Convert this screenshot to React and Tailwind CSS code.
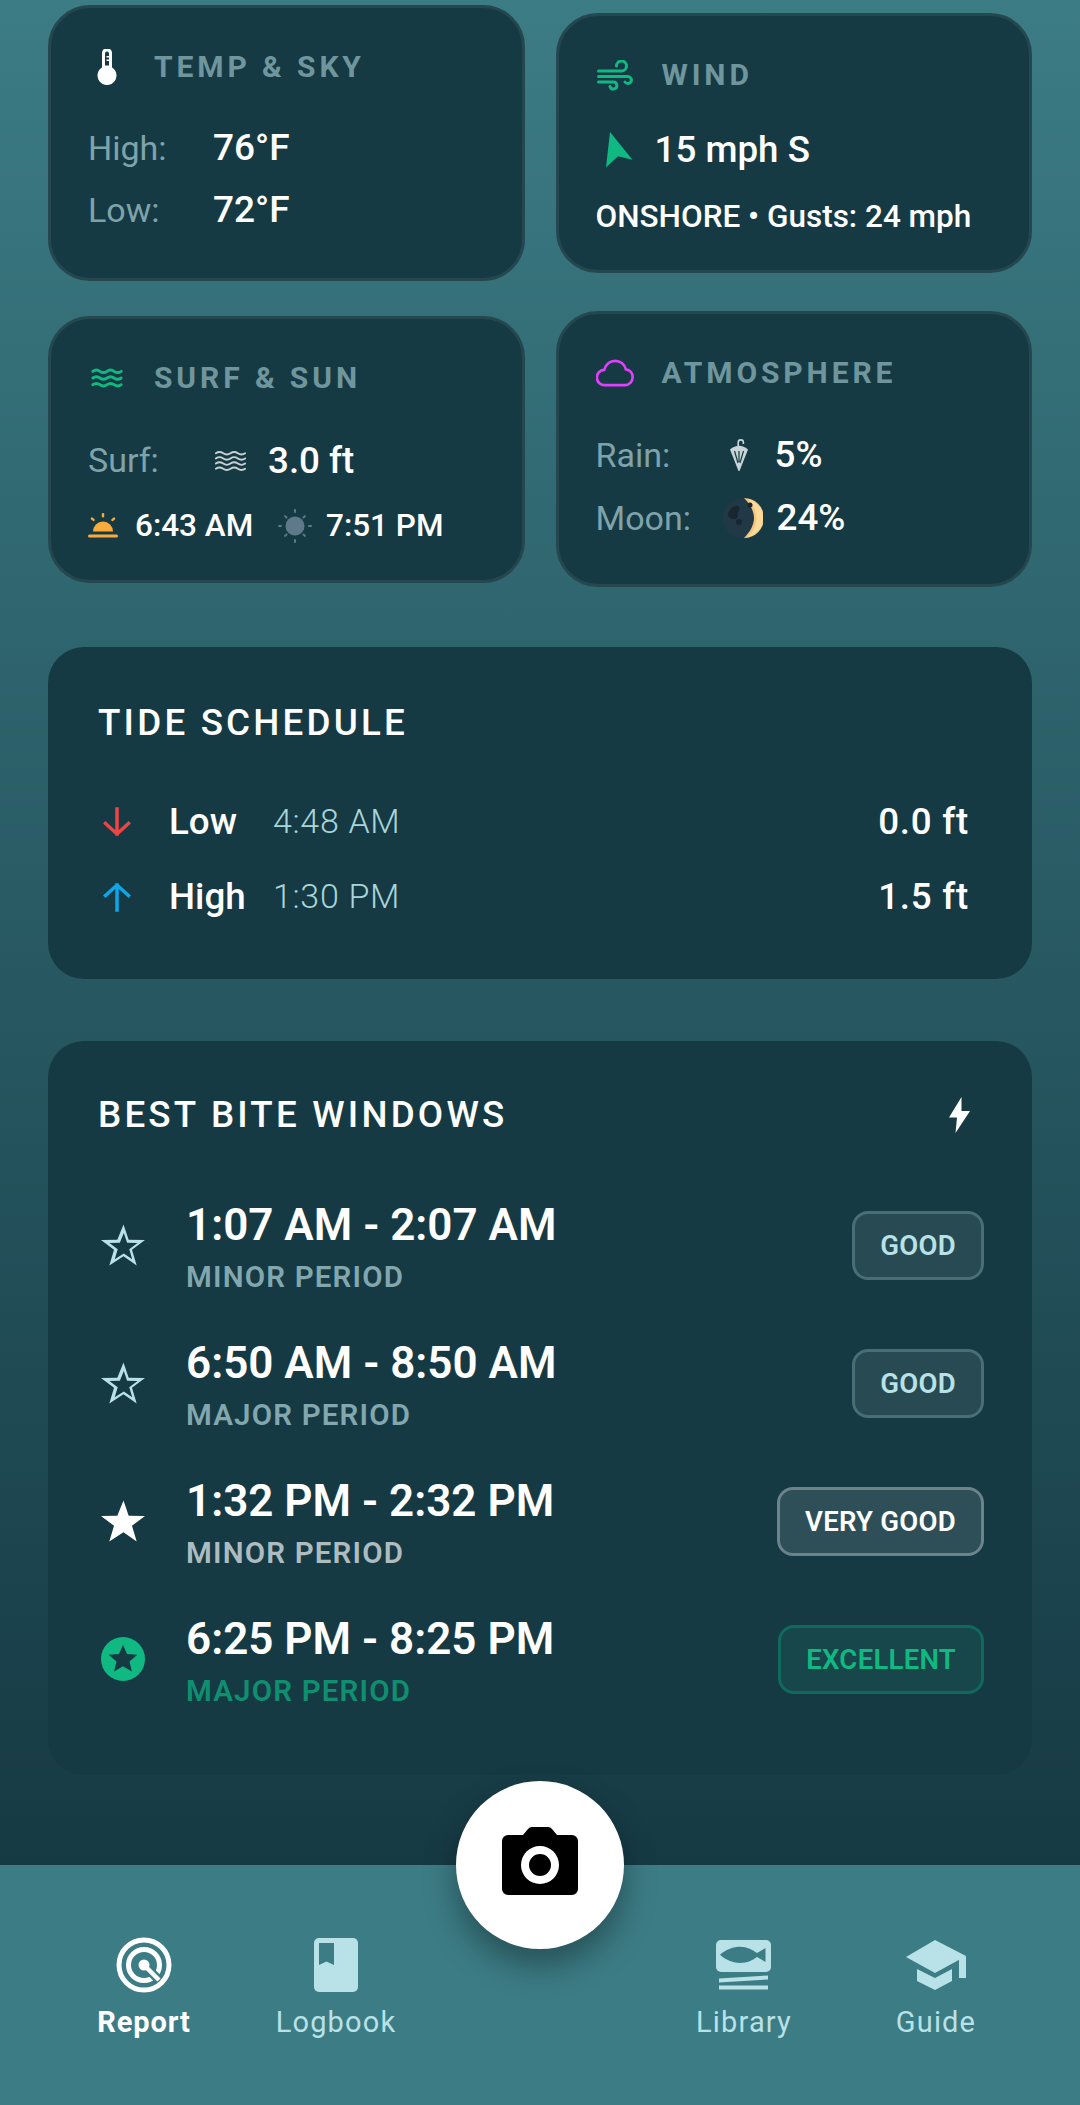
const font = { fontFamily: "Roboto, sans-serif" };

function Thermometer() {
  return (
    <svg width="20" height="36" viewBox="0 0 20 36">
      <path d="M5 4a5 5 0 0 1 10 0v14.500a9.500 9.500 0 1 1-10 0z" fill="#fff" />
      <path d="M8 4.500a2 2 0 0 1 4 0v12h-4z" fill="#163a44" />
      <path d="M9.500 7h2.500v1.500h-2.500zM9.500 10.500h2.500v1.500h-2.500z" fill="#fff" />
    </svg>
  );
}

function Wind() {
  return (
    <svg width="36" height="31" viewBox="0 0 36 31" fill="none" stroke="#10b981" strokeWidth="3" strokeLinecap="round">
      <path d="M1.500 11h23a5 5 0 1 0-5-5" />
      <path d="M1.500 16.500h29.500a3.500 3.500 0 1 1-3 5.500" />
      <path d="M1.500 22h15a3.500 3.500 0 1 1-3.500 4.500" />
    </svg>
  );
}

function Waves({ color, w, h, sw, lines }) {
  const step = 24 / lines;
  const rows = [];
  for (let i = 0; i < lines; i++) rows.push(step / 2 + i * step);
  return (
    <svg width={w} height={h} viewBox="0 0 36 24" fill="none" stroke={color} strokeWidth={sw} strokeLinecap="round">
      {rows.map((y) => (
        <path key={y} d={`M1 ${y}q4.250-3 8.500 0t8.500 0 8.500 0 8.500 0`} />
      ))}
    </svg>
  );
}

function Sunrise() {
  return (
    <svg width="30" height="25" viewBox="0 0 30 25" fill="#fbab3c">
      <path d="M5 18.500a10 10 0 0 1 20 0z" />
      <rect x="0" y="21.500" width="30" height="3" rx="1.500" />
      <rect x="13.800" y="0" width="2.400" height="4.500" rx="1.200" />
      <rect x="3.500" y="4" width="2.400" height="4.500" rx="1.200" transform="rotate(-50 4.700 6.200)" />
      <rect x="24.100" y="4" width="2.400" height="4.500" rx="1.200" transform="rotate(50 25.300 6.200)" />
    </svg>
  );
}

function Sunset() {
  const rays = [0, 45, 90, 135, 180, 225, 270, 315];
  return (
    <svg width="34" height="34" viewBox="0 0 34 34" fill="#5e7a8a">
      <circle cx="17" cy="17" r="9.500" />
      {rays.map((r) => (
        <rect key={r} x="16" y={r % 90 === 0 ? 0 : 2} width="2" height="4" rx="1" transform={`rotate(${r} 17 17)`} />
      ))}
    </svg>
  );
}

function Umbrella() {
  return (
    <svg width="18" height="32" viewBox="0 0 18 32" fill="#c8d5d8">
      <path d="M0 10.500C3 8 6 6.800 9 6.800s6 1.200 9 3.700L9.500 32h-1z" />
      <path d="M8.200 8V3.500a2.600 2.600 0 0 1 5.200 0v1.500" fill="none" stroke="#c8d5d8" strokeWidth="1.600" />
      <path d="M4.500 12 8 24M13.500 12 10 24M9 12v11" fill="none" stroke="#163a44" strokeWidth="1.200" />
    </svg>
  );
}

function Moon() {
  return (
    <svg width="40" height="40" viewBox="0 0 40 40">
      <circle cx="20" cy="20" r="20" fill="#213846" />
      <path d="M21 0a20 20 0 0 1 0 40c6-6 10-13 10-20S27 6 21 0z" fill="#f3c67e" />
      <path d="M25 1c5 5 8.500 12 8.500 19S30 34 25 39c8-2 15-9 15-19S33 3 25 1z" fill="#fbdb9b" />
      <path d="M6 13c2-3 6-6 9-5 2 1 2 4 0 6-1 2 1 4-1 6s-6 1-8-1-1-4 0-6z" fill="#18272f" />
      <circle cx="16" cy="24" r="3" fill="#18272f" />
      <circle cx="27" cy="7" r="2.500" fill="#18272f" />
    </svg>
  );
}

function Arrow({ up, color }) {
  return (
    <svg width="28" height="30" viewBox="0 0 28 30" fill="none" stroke={color} strokeWidth="3.500" strokeLinecap="square">
      {up ? <path d="M14 28V3M2.500 13.500 14 3l11.500 10.500" /> : <path d="M14 2v25M2.500 16.500 14 27l11.500-10.500" />}
    </svg>
  );
}

const STAR = "M22 0l5.300 15.600 16.700.3-13.300 10 4.800 16.100L22 32.500 7.500 42l4.800-16.100L-1 15.900l16.700-.3z";

function StarIcon({ kind }) {
  if (kind === "circle") {
    return (
      <svg width="44" height="44" viewBox="0 0 46 46">
        <circle cx="23" cy="23" r="23" fill="#10b981" />
        <path d="M23 8l4.200 9.700 10.800.9-8.200 7 2.500 10.400-9.300-5.500-9.300 5.500 2.500-10.400-8.200-7 10.800-.9z" fill="#163a44" />
      </svg>
    );
  }
  return (
    <svg width="44" height="42" viewBox="-1 0 45 42">
      <path d={STAR} fill={kind === "solid" ? "#fff" : "#b8e2e7"} />
      {kind === "outline" && <path d={STAR} fill="#163a44" transform="translate(22 24.500) scale(.64) translate(-21.500 -24.500)" />}
    </svg>
  );
}

function Bolt() {
  return (
    <svg width="21" height="36" viewBox="0 0 21 36" fill="#fff">
      <path d="M12.500 0 0 20.500h8L6.500 36 21 14h-8.500z" />
    </svg>
  );
}

function ReportIcon() {
  return (
    <svg width="56" height="56" viewBox="0 0 56 56" fill="none" stroke="#fff">
      <circle cx="28" cy="28" r="25" strokeWidth="5" />
      <circle cx="28" cy="28" r="15.500" strokeWidth="5" />
      <path d="M35 35 43 43" strokeWidth="9" stroke="#3c7c85" />
      <path d="M28 28 43 43" strokeWidth="4.500" />
      <circle cx="28" cy="28" r="5.500" fill="#fff" stroke="none" />
    </svg>
  );
}

function LogbookIcon() {
  return (
    <svg width="44" height="54" viewBox="0 0 44 54">
      <rect width="44" height="54" rx="5" fill="#b8e2e7" />
      <path d="M5 5h15v22l-7.500-3.500L5 27z" fill="#3c7c85" />
    </svg>
  );
}

function LibraryIcon() {
  return (
    <svg width="56" height="50" viewBox="0 0 56 50">
      <rect width="55" height="32" rx="5" fill="#b8e2e7" />
      <path d="M4 14.800C10 9 18 6.700 24 6.700c7 0 13 3.300 17 6.300L49.500 8v14L41 17c-4 3-10 6-17 6-6 0-14-2.500-20-8.200z" fill="#3c7c85" />
      <path d="M3 38.500 52 35.500v4L3 42.500z" fill="#b8e2e7" />
      <rect x="3" y="45.500" width="49" height="4" fill="#b8e2e7" />
    </svg>
  );
}

function GuideIcon() {
  return (
    <svg width="60" height="50" viewBox="0 0 60 50" fill="#b8e2e7">
      <path d="M0 17 29 0l31 16-31 17z" />
      <path d="M11 29l18 9 17-9v12L29 50 11 41z" />
      <path d="M53 18l7-2v22h-7z" />
    </svg>
  );
}

function CameraIcon() {
  return (
    <svg width="76" height="68" viewBox="0 0 76 68">
      <path
        fillRule="evenodd"
        fill="#000"
        d="M6 8h15l5-6a5 5 0 0 1 4-2h16a5 5 0 0 1 4 2l5 6h15a6 6 0 0 1 6 6v48a6 6 0 0 1-6 6H6a6 6 0 0 1-6-6V14a6 6 0 0 1 6-6zM38 19a19 19 0 1 0 0 38 19 19 0 0 0 0-38zm0 8a11 11 0 1 1 0 22 11 11 0 0 1 0-22z"
      />
    </svg>
  );
}

function Card({ icon, title, className, children }) {
  return (
    <div className={`rounded-[42px] border-[3px] border-[#25474f] bg-[#163a44] px-[37px] ${className}`}>
      <div className="flex h-[40px] items-center">
        <div className="flex w-[38px] shrink-0 items-center justify-center">{icon}</div>
        <div className="ml-[28px] text-[30px] font-bold leading-none tracking-[0.13em] text-[#6f969d]">{title}</div>
      </div>
      {children}
    </div>
  );
}

const bites = [
  { time: "1:07 AM - 2:07 AM", sub: "MINOR PERIOD", tag: "GOOD", star: "outline", subc: "text-[#82a7ae]", chip: "border-[#4a6e76] bg-[#274a53] text-[#b8e2e7]" },
  { time: "6:50 AM - 8:50 AM", sub: "MAJOR PERIOD", tag: "GOOD", star: "outline", subc: "text-[#82a7ae]", chip: "border-[#4a6e76] bg-[#274a53] text-[#b8e2e7]" },
  { time: "1:32 PM - 2:32 PM", sub: "MINOR PERIOD", tag: "VERY GOOD", star: "solid", subc: "text-[#adbcc0]", chip: "border-[#6b8389] bg-[#2e4f58] text-white" },
  { time: "6:25 PM - 8:25 PM", sub: "MAJOR PERIOD", tag: "EXCELLENT", star: "circle", subc: "text-[#0f8f70]", chip: "border-[#0f6a5c] bg-[#17474a] text-[#10b981]" },
];

function NavItem({ icon, label, active }) {
  return (
    <div className="flex flex-col items-center">
      <div className="flex h-[56px] items-center justify-center">{icon}</div>
      <div className={`mt-[9px] text-[29px] leading-[40px] ${active ? "font-bold tracking-[0.03em] text-white" : "font-normal tracking-[0.04em] text-[#b8e2e7]"}`}>
        {label}
      </div>
    </div>
  );
}

export default function App() {
  return (
    <div style={font} className="relative h-[2105px] w-[1080px] overflow-hidden bg-[#163a44]">
      <div className="h-[1865px] bg-gradient-to-b from-[#3c7c85] to-[#163a44] px-[48px] pt-[5px]">
        <div className="grid grid-cols-2 items-center gap-x-[31px] gap-y-[30px]">
          <Card icon={<Thermometer />} title="TEMP & SKY" className="h-[276px] pt-[39px]">
            <div className="mt-[30px] flex h-[62px] items-center">
              <span className="w-[125px] text-[34px] text-[#7fa3aa]">High:</span>
              <span className="text-[37px] font-medium text-white">76°F</span>
            </div>
            <div className="flex h-[62px] items-center">
              <span className="w-[125px] text-[34px] text-[#7fa3aa]">Low:</span>
              <span className="text-[37px] font-medium text-white">72°F</span>
            </div>
          </Card>
          <Card icon={<Wind />} title="WIND" className="h-[260px] pt-[39px]">
            <div className="mt-[33px] flex h-[44px] items-center">
              <svg width="27" height="36" viewBox="0 0 27 36" className="ml-[10px]" fill="#10b981">
                <path d="M4 0 26.500 27.700 12 24.300 0 35.500z" />
              </svg>
              <span className="ml-[22px] text-[36.750px] font-medium text-white">15 mph S</span>
            </div>
            <div className="mt-[25px] text-[31.500px] font-medium leading-[40px] text-white">ONSHORE • Gusts: 24 mph</div>
          </Card>
          <Card icon={<Waves color="#10b981" w={36} h={20} sw={3.500} lines={3} />} title="SURF & SUN" className="h-[267px] pt-[39px]">
            <div className="mt-[41px] flex h-[44px] items-center">
              <span className="w-[127px] text-[34px] text-[#7fa3aa]">Surf:</span>
              <Waves color="#c8d1d3" w={31} h={26} sw={2.200} lines={4} />
              <span className="ml-[22px] text-[36.750px] font-medium text-white">3.0 ft</span>
            </div>
            <div className="mt-[21px] flex h-[44px] items-center">
              <Sunrise />
              <span className="ml-[17px] w-[143px] text-[31.500px] font-medium text-white">6:43 AM</span>
              <Sunset />
              <span className="ml-[14px] text-[31.500px] font-medium text-white">7:51 PM</span>
            </div>
          </Card>
          <Card icon={<svg width="42" height="30" viewBox="0 0 42 30" fill="none" stroke="#e040fb" strokeWidth="3"><path d="M10 28.500a8.500 8.500 0 0 1-1-17C11 5 16 1.500 21 1.500c6 0 11 4 12 9.500 4.500.5 7.500 4 7.500 8.500 0 5-4 9-8.500 9z" /></svg>} title="ATMOSPHERE" className="h-[276px] pt-[39px]">
            <div className="mt-[37px] flex h-[50px] items-center">
              <span className="w-[127px] text-[34px] text-[#7fa3aa]">Rain:</span>
              <div className="w-[52px] pl-[7px]"><Umbrella /></div>
              <span className="text-[36.750px] font-medium text-white">5%</span>
            </div>
            <div className="mt-[13px] flex h-[50px] items-center">
              <span className="w-[127px] text-[34px] text-[#7fa3aa]">Moon:</span>
              <Moon />
              <span className="ml-[14px] text-[36.750px] font-medium text-white">24%</span>
            </div>
          </Card>
        </div>

        <div className="mt-[60px] h-[332px] rounded-[36px] bg-[#163a44] pl-[50px] pr-[63px] pt-[54px]">
          <div className="text-[36.750px] font-medium leading-[44px] tracking-[0.087em] text-white">TIDE SCHEDULE</div>
          <div className="mt-[39px] flex h-[75px] items-center">
            <div className="ml-[5px] w-[66px]"><Arrow color="#ef4444" /></div>
            <div className="w-[104px] text-[36.750px] font-medium text-white">Low</div>
            <div className="flex-1 text-[34px] font-light tracking-[0.02em] text-[#a8d5da]">4:48 AM</div>
            <div className="text-[36.750px] font-medium tracking-[0.02em] text-white">0.0 ft</div>
          </div>
          <div className="flex h-[75px] items-center">
            <div className="ml-[5px] w-[66px]"><Arrow up color="#0ea5e9" /></div>
            <div className="w-[104px] text-[36.750px] font-medium text-white">High</div>
            <div className="flex-1 text-[34px] font-light tracking-[0.02em] text-[#a8d5da]">1:30 PM</div>
            <div className="text-[36.750px] font-medium tracking-[0.02em] text-white">1.5 ft</div>
          </div>
        </div>

        <div className="mt-[62px] h-[734px] rounded-[36px] bg-[#163a44] pl-[50px] pr-[48px] pt-[52px]">
          <div className="flex h-[44px] items-center justify-between pr-[14px]">
            <div className="text-[36.750px] font-medium tracking-[0.087em] text-white">BEST BITE WINDOWS</div>
            <Bolt />
          </div>
          <div className="mt-[39px] flex flex-col">
            {bites.map((b) => (
              <div key={b.time} className="flex h-[138px] items-center">
                <div className="ml-[3px] flex w-[44px] shrink-0 justify-center"><StarIcon kind={b.star} /></div>
                <div className="ml-[41px] flex-1">
                  <div className="text-[44px] font-semibold leading-[64px] text-white">{b.time}</div>
                  <div className={`text-[29.500px] font-semibold leading-[40px] tracking-[0.04em] ${b.subc}`}>{b.sub}</div>
                </div>
                <div className={`rounded-[16px] border-[3px] px-[25px] text-[27.500px] font-semibold leading-[63px] tracking-[0.01em] ${b.chip}`}>
                  {b.tag}
                </div>
              </div>
            ))}
          </div>
        </div>
      </div>

      <div className="grid h-[240px] grid-cols-[192px_192px_1fr_192px_192px] bg-[#3c7c85] px-[48px] pt-[72px]">
        <NavItem icon={<ReportIcon />} label="Report" active />
        <NavItem icon={<LogbookIcon />} label="Logbook" />
        <div />
        <NavItem icon={<LibraryIcon />} label="Library" />
        <NavItem icon={<GuideIcon />} label="Guide" />
      </div>

      {/* camera button sits over the nav edge */}
      <div className="absolute left-[456px] top-[1781px] flex h-[168px] w-[168px] items-center justify-center rounded-full bg-white pb-[8px] shadow-[0_16px_32px_rgba(0,0,0,0.35)]">
        <CameraIcon />
      </div>
    </div>
  );
}
